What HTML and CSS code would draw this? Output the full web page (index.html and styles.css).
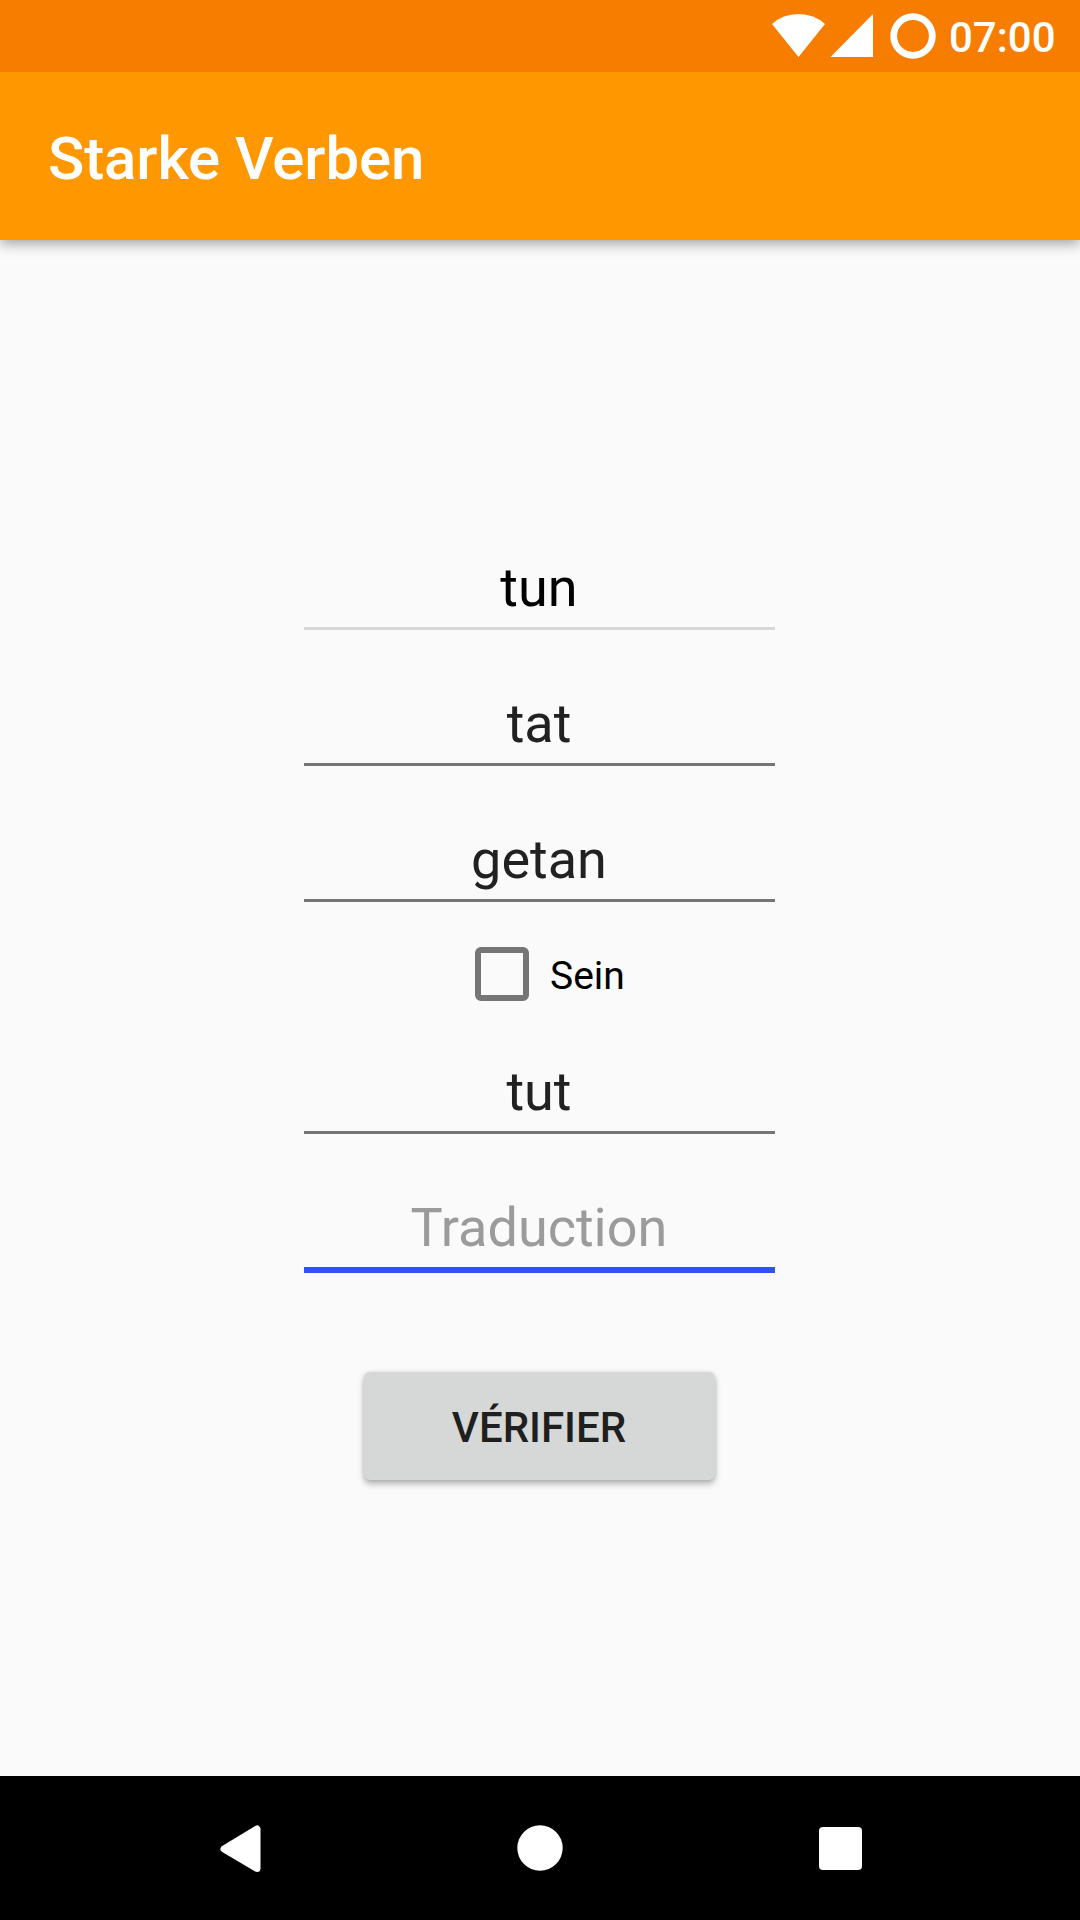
FILE: index.html
```html
<!DOCTYPE html>
<html lang="fr">
<head>
<meta charset="utf-8">
<title>Starke Verben</title>
<link rel="stylesheet" href="styles.css">
</head>
<body>
<div class="screen">
  <div class="status-bar">
    <svg class="status-icons" viewBox="0 0 166 72" aria-hidden="true">
      <path d="M2 24Q13 14 28.500 14T55 24L28.500 57Z"/>
      <path d="M60.500 57L103 14V57Z"/>
      <circle class="ring" cx="143" cy="36" r="19.300"/>
    </svg>
    <span class="clock">07:00</span>
  </div>
  <header class="app-bar"><h1 class="title">Starke Verben</h1></header>
  <main class="form">
    <div class="field disabled">tun</div>
    <div class="field">tat</div>
    <div class="field">getan</div>
    <div class="check"><span class="box"></span><span class="check-label">Sein</span></div>
    <div class="field">tut</div>
    <div class="field focused">Traduction</div>
    <button class="verify" type="button">VÉRIFIER</button>
  </main>
  <nav class="nav-bar">
    <svg class="nav-icon" viewBox="0 0 60 60" aria-hidden="true"><path class="back" d="M14 31L47 11V50.500Z"/></svg>
    <svg class="nav-icon" viewBox="0 0 60 60" aria-hidden="true"><circle cx="30" cy="30" r="22.700"/></svg>
    <svg class="nav-icon" viewBox="0 0 60 60" aria-hidden="true"><rect x="9" y="9" width="43" height="43" rx="4"/></svg>
  </nav>
</div>
</body>
</html>
```
FILE: styles.css
```css
* { box-sizing: border-box; }

body {
  margin: 0;
  font-family: Roboto, "Liberation Sans", sans-serif;
}

.screen {
  width: 1080px;
  height: 1920px;
  display: flex;
  flex-direction: column;
  overflow: hidden;
  background: #fafafa;
}

.status-bar {
  position: relative;
  z-index: 1;
  height: 72px;
  flex: none;
  display: flex;
  justify-content: flex-end;
  padding-right: 23px;
  background: #f77d00;
}

.status-icons {
  width: 166px;
  height: 72px;
  margin-right: 13px;
  fill: #fff;
}

.ring {
  fill: none;
  stroke: #fff;
  stroke-width: 6.8px;
}

.clock {
  width: 108px;
  color: #fff;
  font-size: 42px;
  font-weight: 500;
  line-height: 50px;
  padding-top: 13px;
  white-space: nowrap;
}

.app-bar {
  height: 168px;
  flex: none;
  padding: 51px 48px 0;
  background: #ff9800;
  box-shadow: 0 4px 12px rgba(0, 0, 0, .34);
}

.title {
  margin: 0;
  color: #fff;
  font-size: 60px;
  font-weight: 500;
  line-height: 72px;
  letter-spacing: -.1px;
}

.form {
  flex: 1;
  display: flex;
  flex-direction: column;
  align-items: center;
  padding-top: 316px;
}

.field {
  width: 471px;
  height: 74px;
  margin: 0 1px 62px 0;
  padding-right: 1px;
  border-bottom: 3px solid #757575;
  color: #212121;
  font-size: 54px;
  line-height: 64px;
  text-align: center;
}

.disabled {
  color: #000;
  border-bottom-color: #d7d7d7;
}

.focused {
  height: 77px;
  margin-bottom: 99px;
  border-bottom: 6px solid #304ffe;
  color: #9b9b9b;
}

.check {
  width: 130px;
  height: 54px;
  display: flex;
  align-items: center;
  gap: 21px;
  margin: -17px 0 59px;
}

.box {
  width: 54px;
  height: 54px;
  flex: none;
  border: 6px solid #757575;
  border-radius: 6px;
}

.check-label {
  color: #000;
  font-size: 39px;
  line-height: 46px;
  padding-top: 4px;
}

.verify {
  width: 351px;
  height: 108px;
  margin-right: 1px;
  padding: 4px 1px 0 0;
  border: 0;
  border-radius: 6px;
  background: #d6d8d7;
  box-shadow: 0 4px 6px rgba(0, 0, 0, .28), 0 0 4px rgba(0, 0, 0, .1);
  color: #1e1f1e;
  font: 500 42px/50px Roboto, "Liberation Sans", sans-serif;
}

.nav-bar {
  height: 144px;
  flex: none;
  display: flex;
  justify-content: center;
  align-items: center;
  gap: 240px;
  background: #000;
}

.nav-icon {
  width: 60px;
  height: 60px;
  fill: #fff;
}

.back {
  stroke: #fff;
  stroke-width: 7px;
  stroke-linejoin: round;
}
```
